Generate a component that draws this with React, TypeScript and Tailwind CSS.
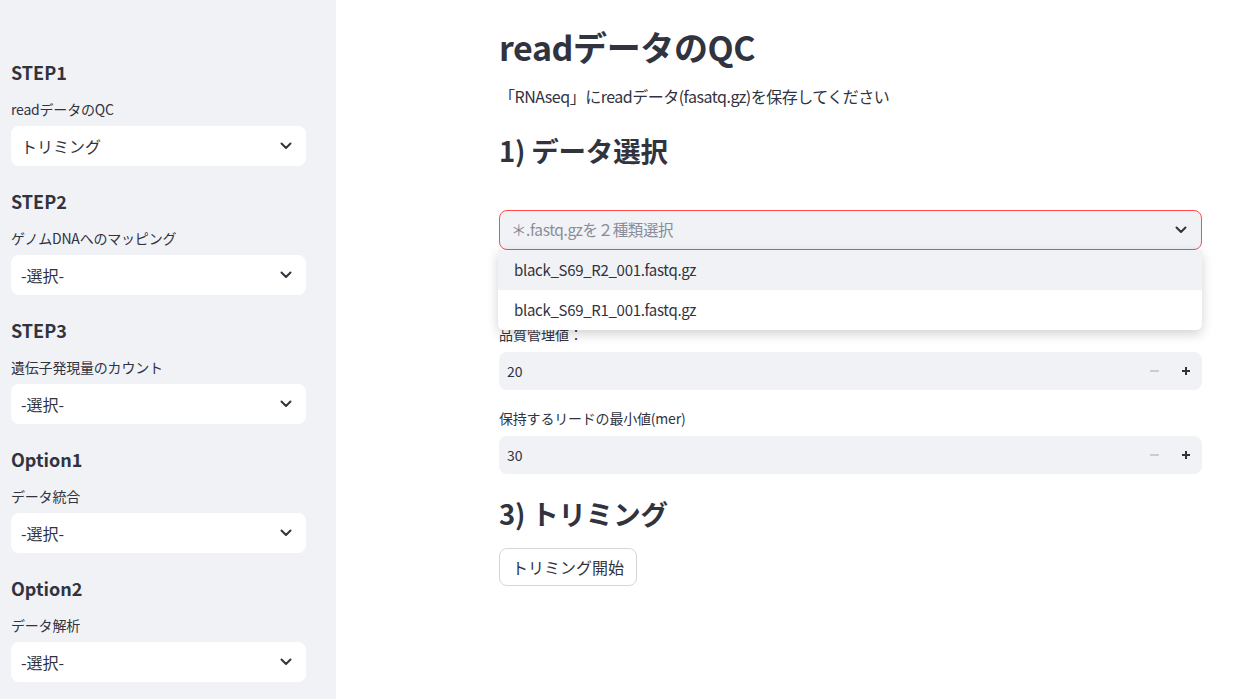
import React from "react";

const FONT = { fontFamily: '"Noto Sans CJK JP", "Noto Sans", sans-serif' };

function Chevron({ className = "" }: { className?: string }) {
  return (
    <svg width="12" height="8" viewBox="0 0 12 8" className={className}>
      <path d="M1.5 1.5 L6 6 L10.5 1.5" fill="none" stroke="#31333f" strokeWidth="2" strokeLinecap="round" strokeLinejoin="round" />
    </svg>
  );
}

function SideGroup({ title, label, value, first }: { title: string; label: string; value: string; first?: boolean }) {
  return (
    <div className={first ? "" : "mt-[22px]"}>
      <div className="text-[18px] leading-[26px] font-bold text-[#31333f]">{title}</div>
      <div className="mt-[14px] text-[14px] leading-[20px] text-[#31333f] tracking-[-0.2px]">{label}</div>
      <div className="mt-[7px] h-[40px] w-[295px] rounded-[8px] bg-white flex items-center justify-between pl-[11px] pr-[14px]">
        <span className="text-[16px] -ml-[1px]">{value}</span>
        <Chevron />
      </div>
    </div>
  );
}

function NumberInput({ value }: { value: string }) {
  return (
    <div className="h-[38px] w-full rounded-[8px] bg-[#f0f2f6] flex items-center">
      <span className="flex-1 pl-[8px] text-[14px] text-[#31333f]">{value}</span>
      <div className="w-[32px] h-full flex items-center justify-center">
        <div className="w-[9px] h-[1.5px] bg-[#c9ccd4]" />
      </div>
      <div className="w-[32px] h-full flex items-center justify-center">
        <svg width="10" height="10" viewBox="0 0 10 10">
          <path d="M5 1 V9 M1 5 H9" stroke="#31333f" strokeWidth="2" />
        </svg>
      </div>
    </div>
  );
}

export default function App() {
  return (
    <div className="flex w-[1237px] h-[699px] overflow-hidden text-[#31333f]" style={FONT}>
      <aside className="w-[336px] shrink-0 h-full bg-[#f0f2f6] pl-[11px] pt-[59px]">
        <SideGroup first title="STEP1" label="readデータのQC" value="トリミング" />
        <SideGroup title="STEP2" label="ゲノムDNAへのマッピング" value="-選択-" />
        <SideGroup title="STEP3" label="遺伝子発現量のカウント" value="-選択-" />
        <SideGroup title="Option1" label="データ統合" value="-選択-" />
        <SideGroup title="Option2" label="データ解析" value="-選択-" />
      </aside>
      <main className="flex-1 bg-white pl-[163px] pr-[35px] pt-[25px]">
        <div className="w-[703px]">
          <h1 className="text-[34px] leading-[44px] font-bold tracking-[-0.4px]">readデータのQC</h1>
          <p className="mt-[15px] text-[16px] leading-[24px] tracking-[-0.5px]">「RNAseq」にreadデータ(fasatq.gz)を保存してください</p>
          <h2 className="mt-[24px] text-[27.5px] leading-[36px] font-bold tracking-[-0.2px]">1) データ選択</h2>
          <div className="relative mt-[42px]">
            <div className="h-[40px] rounded-[8px] bg-[#f0f2f6] border border-[#ff4b4b] flex items-center justify-between pl-[11px] pr-[14px]">
              <span className="text-[15.5px] tracking-[-0.4px] text-[#8a8d97]">＊.fastq.gzを２種類選択</span>
              <Chevron />
            </div>
            <div className="absolute left-[-1px] right-0 top-[40px] z-10 bg-white rounded-b-[6px] shadow-[0_4px_12px_rgba(0,0,0,0.18)] overflow-hidden">
              <div className="h-[40px] bg-[#f0f2f6] flex items-center pl-[16px] text-[15px] tracking-[-0.3px]">black_S69_R2_001.fastq.gz</div>
              <div className="h-[40px] bg-white flex items-center pl-[16px] text-[15px] tracking-[-0.3px]">black_S69_R1_001.fastq.gz</div>
            </div>
          </div>
          <div className="mt-[18px] h-[36px]" />
          <div className="mt-[20px] text-[14px] leading-[20px]">品質管理値：</div>
          <div className="mt-[8px]"><NumberInput value="20" /></div>
          <div className="mt-[18px] text-[14px] leading-[20px] tracking-[-0.2px]">保持するリードの最小値(mer)</div>
          <div className="mt-[8px]"><NumberInput value="30" /></div>
          <h2 className="mt-[21px] text-[27.5px] leading-[36px] font-bold tracking-[-0.2px]">3) トリミング</h2>
          <button className="mt-[17px] h-[38px] px-[12px] rounded-[8px] border border-[#d6d6d9] bg-white text-[16px] text-[#31333f]">トリミング開始</button>
        </div>
      </main>
    </div>
  );
}
